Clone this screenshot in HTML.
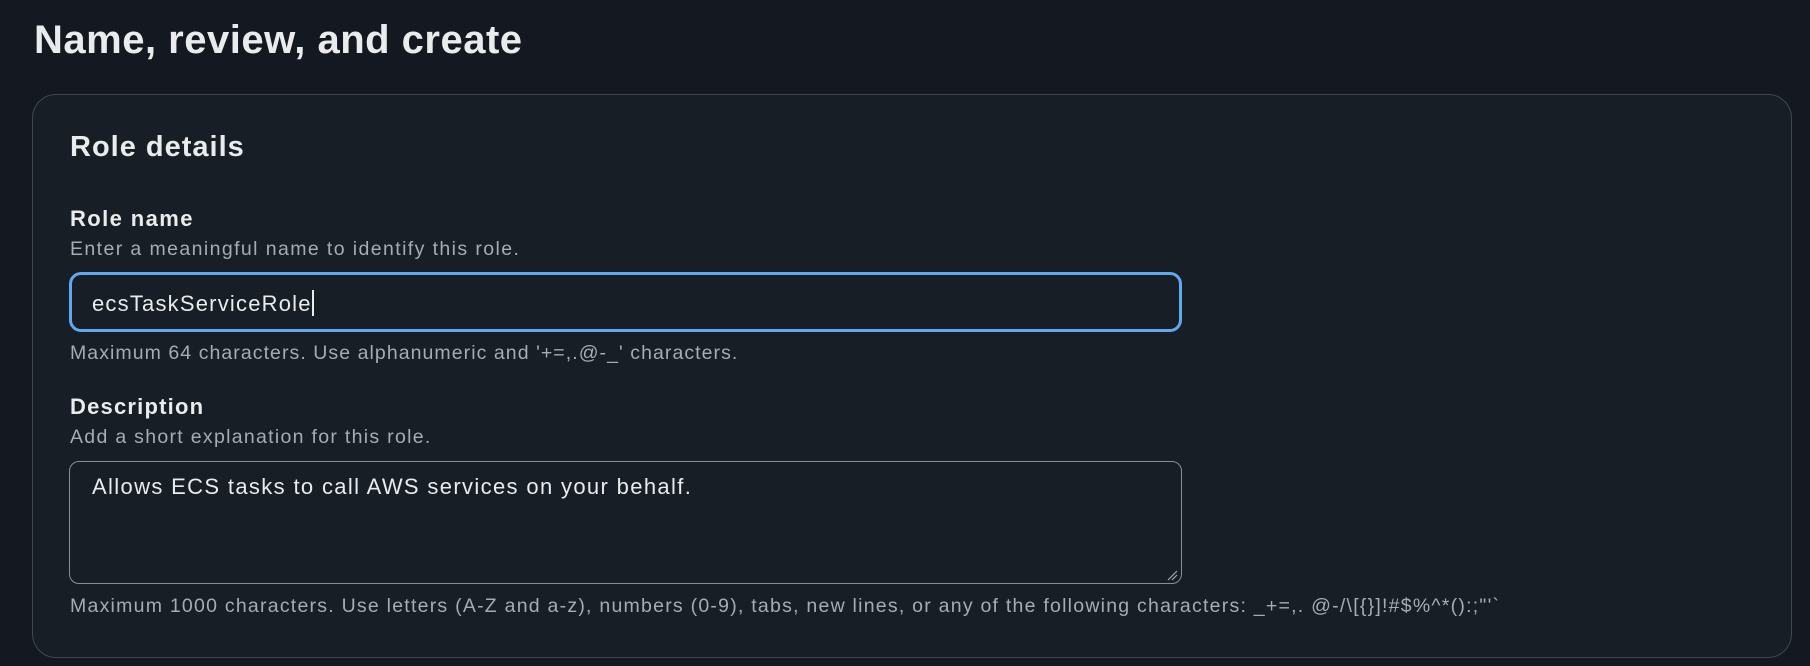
<!DOCTYPE html>
<html><head><meta charset="utf-8"><style>
html,body{margin:0;padding:0;width:1810px;height:666px;overflow:hidden;background:#141820;font-family:"Liberation Sans",sans-serif;}
.t{position:absolute;white-space:nowrap;line-height:1;}
.card{position:absolute;left:32px;top:94px;width:1760px;height:564px;box-sizing:border-box;border:1px solid #424650;border-radius:24px;background:#181e26;}
.inp{position:absolute;left:69px;top:272px;width:1113px;height:60px;box-sizing:border-box;border:3px solid #5fa9ee;border-radius:12px;background:#181e26;}
.ta{position:absolute;left:69px;top:461px;width:1113px;height:123px;box-sizing:border-box;border:1px solid #8a8d94;border-radius:10px;background:#181e26;}
.w{color:#e9ebed;}
.g{color:#a7abb3;letter-spacing:1.2px;}
</style></head><body>
<div class="t w" style="left:34px;top:20px;font-size:40px;font-weight:bold;letter-spacing:0.5px;">Name, review, and create</div>
<div class="card"></div>
<div class="t w" style="left:70px;top:133px;font-size:29px;font-weight:bold;letter-spacing:1px;">Role details</div>
<div class="t w" style="left:70px;top:208px;font-size:22px;font-weight:bold;letter-spacing:1.4px;">Role name</div>
<div class="t g" style="left:70px;top:240px;font-size:19.5px;letter-spacing:1.4px;">Enter a meaningful name to identify this role.</div>
<div class="inp"></div>
<div class="t w" style="left:92px;top:290px;font-size:22px;letter-spacing:1.2px;">ecsTaskServiceRole<span style="display:inline-block;width:2px;height:26px;background:#e9ebed;vertical-align:-5px;"></span></div>
<div class="t g" style="left:70px;top:344px;font-size:19.5px;letter-spacing:1.06px;">Maximum 64 characters. Use alphanumeric and '+=,.@-_' characters.</div>
<div class="t w" style="left:70px;top:396px;font-size:22px;font-weight:bold;letter-spacing:1.2px;">Description</div>
<div class="t g" style="left:70px;top:428px;font-size:19.5px;letter-spacing:1.3px;">Add a short explanation for this role.</div>
<div class="ta"></div>
<svg style="position:absolute;left:1166px;top:569px" width="12" height="12"><path d="M2 11 L11 2 M6 11 L11 6" stroke="#a7abb3" stroke-width="1.2"/></svg>
<div class="t w" style="left:92px;top:476px;font-size:22px;letter-spacing:1.35px;">Allows ECS tasks to call AWS services on your behalf.</div>
<div class="t g" style="left:70px;top:597px;font-size:19.5px;letter-spacing:1.24px;">Maximum 1000 characters. Use letters (A-Z and a-z), numbers (0-9), tabs, new lines, or any of the following characters: _+=,. @-/\[{}]!#$%^*():;"'`</div>
</body></html>
